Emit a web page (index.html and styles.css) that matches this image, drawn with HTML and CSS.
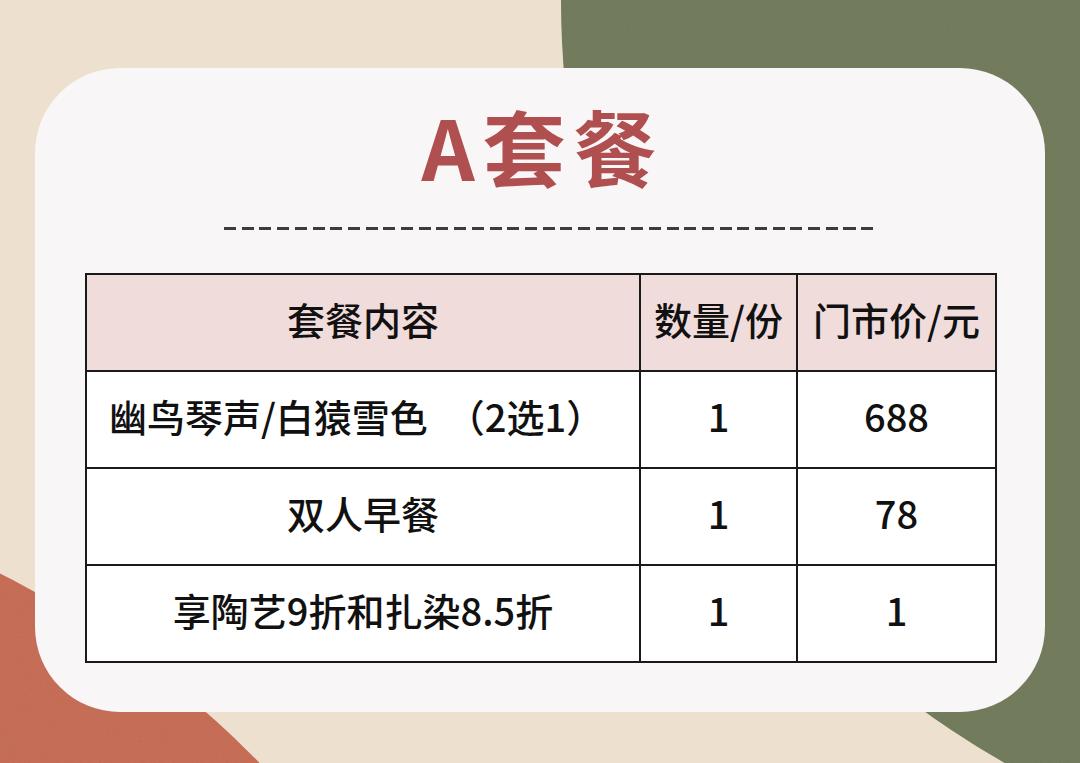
FILE: index.html
```html
<!DOCTYPE html>
<html lang="zh-CN">
<head>
<meta charset="utf-8">
<title>A套餐</title>
<link rel="stylesheet" href="styles.css">
</head>
<body>
<svg class="bg" width="1080" height="763" viewBox="0 0 1080 763" aria-hidden="true">
  <defs>
    <filter id="grain" x="0" y="0" width="100%" height="100%">
      <feTurbulence type="fractalNoise" baseFrequency="0.8" numOctaves="2" seed="4" result="n"/>
      <feColorMatrix in="n" type="matrix" values="0 0 0 0 0  0 0 0 0 0  0 0 0 0 0  0 0 0 0.07 0"/>
      <feComposite in2="SourceGraphic" operator="in"/>
    </filter>
  </defs>
  <rect width="1080" height="763" fill="#ede0ce"/>
  <circle cx="1439" cy="0" r="878" fill="#76805f"/>
  <circle cx="1439" cy="0" r="878" fill="#76805f" filter="url(#grain)"/>
  <circle cx="-431" cy="1437" r="965" fill="#cc7159"/>
  <circle cx="-431" cy="1437" r="965" fill="#cc7159" filter="url(#grain)"/>
</svg>
<main class="card">
  <h1 class="title">A套餐</h1>
  <div class="dash"></div>
  <table class="menu">
    <colgroup>
      <col class="c-name">
      <col class="c-qty">
      <col class="c-price">
    </colgroup>
    <thead>
      <tr><th>套餐内容</th><th>数量/份</th><th>门市价/元</th></tr>
    </thead>
    <tbody>
      <tr><td class="left">幽鸟琴声/白猿雪色　（2选1）</td><td>1</td><td>688</td></tr>
      <tr><td>双人早餐</td><td>1</td><td>78</td></tr>
      <tr><td>享陶艺9折和扎染8.5折</td><td>1</td><td>1</td></tr>
    </tbody>
  </table>
</main>
</body>
</html>
```
FILE: styles.css
```css
html, body {
  margin: 0;
  padding: 0;
}
body {
  width: 1080px;
  height: 763px;
  overflow: hidden;
  position: relative;
  background: #ede0ce;
  font-family: "Noto Sans CJK SC", "Noto Sans", sans-serif;
}
.bg {
  position: absolute;
  left: 0;
  top: 0;
  z-index: 0;
}
.card {
  position: relative;
  z-index: 1;
  box-sizing: border-box;
  width: 1010px;
  height: 644px;
  margin: 68px 0 0 35px;
  border-radius: 85px;
  background: #f8f6f7;
  padding-top: 27px;
  display: flex;
  flex-direction: column;
  align-items: flex-start;
}
.title {
  align-self: center;
  margin: 0;
  padding-left: 6px;
  font-size: 83px;
  line-height: 100px;
  font-weight: 700;
  letter-spacing: 8px;
  color: #b04f4f;
}
.dash {
  margin: 32px 0 0 189px;
  width: 650px;
  height: 3px;
  background: repeating-linear-gradient(to right, #3c3c3c 0 12px, transparent 12px 17.7px);
}
.menu {
  margin: 43px 0 0 50px;
  width: 910px;
  table-layout: fixed;
  border-collapse: collapse;
  border: 2px solid #1a1a1a;
  background: #ffffff;
  color: #111;
}
.c-name { width: 554px; }
.c-qty { width: 157px; }
.c-price { width: 199px; }
.menu th,
.menu td {
  box-sizing: border-box;
  border: 2px solid #1a1a1a;
  height: 97px;
  padding: 0 0 7px;
  text-align: center;
  vertical-align: middle;
  font-size: 38px;
  font-weight: 500;
  line-height: 1.2;
  white-space: nowrap;
}
.menu th {
  background: #f1dcdc;
}
.menu td.left {
  text-align: left;
  padding-left: 22px;
}
```
